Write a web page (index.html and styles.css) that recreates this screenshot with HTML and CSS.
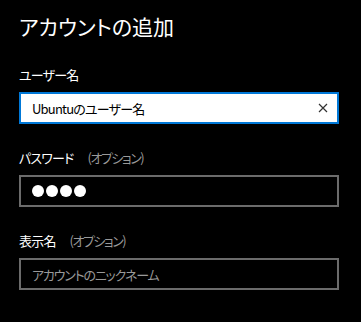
FILE: index.html
```html
<html>
  <head>
    <meta charset="utf-8">
    <link rel="stylesheet" href="styles.css">
  </head>
  <body>
    <div class="dialog">
      <div class="title">アカウントの追加</div>

      <div class="field">
        <div class="label">ユーザー名</div>
        <div class="box active">
          <span class="value">Ubuntuのユーザー名</span>
          <svg class="clear" width="10" height="10" viewBox="0 0 10 10">
            <path d="M1 1 L9 9 M9 1 L1 9" stroke="#333" stroke-width="1.2" fill="none"/>
          </svg>
        </div>
      </div>

      <div class="field">
        <div class="label">パスワード<span class="optional">(オプション)</span></div>
        <div class="box">
          <span class="dots">
            <span class="dot"></span><span class="dot"></span><span class="dot"></span><span class="dot"></span>
          </span>
        </div>
      </div>

      <div class="field">
        <div class="label">表示名<span class="optional">(オプション)</span></div>
        <div class="box">
          <span class="placeholder">アカウントのニックネーム</span>
        </div>
      </div>
    </div>
  </body>
</html>
```

FILE: styles.css
```css
body {
  margin: 0;
  background-color: #000;
  color: #fff;
  font-family: 'Noto Sans CJK JP', 'Noto Sans', sans-serif;
  font-feature-settings: "palt";
}
.dialog {
  padding: 12px 22px 0 19px;
}
.title {
  font-size: 21px;
  line-height: 28px;
  margin-bottom: 26px;
}
.field {
  margin-bottom: 25px;
}
.label {
  font-size: 13px;
  line-height: 18px;
  letter-spacing: -0.8px;
  margin-bottom: 8px;
}
.optional {
  color: #999;
  margin-left: 14px;
  letter-spacing: -1.5px;
}
.box {
  box-sizing: border-box;
  height: 32px;
  border: 2px solid #6b6b6b;
  display: flex;
  align-items: center;
  padding: 0 10px 0 11px;
  font-size: 13px;
  letter-spacing: -0.8px;
}
.box.active {
  background-color: #fff;
  border-color: #0078d7;
  color: #000;
}
.value {
  flex: 1;
}
.clear {
  margin-right: -1px;
}
.dots {
  display: flex;
  gap: 2px;
}
.dot {
  width: 12px;
  height: 12px;
  border-radius: 50%;
  background-color: #fff;
}
.placeholder {
  color: #999;
  letter-spacing: -1.2px;
}
```
